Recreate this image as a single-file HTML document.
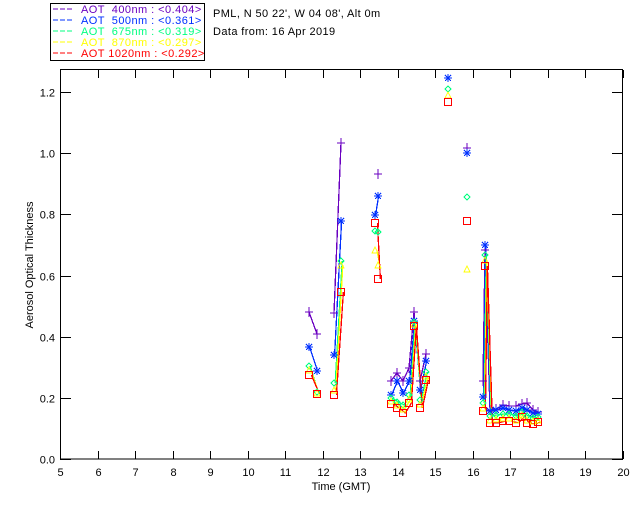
<!DOCTYPE html>
<html><head><meta charset="utf-8"><style>
body{margin:0;background:#fff;width:640px;height:512px;overflow:hidden}
svg{display:block}
text{font-family:"Liberation Sans",sans-serif;font-size:11px}
.lg text{letter-spacing:0.45px}
.tt{letter-spacing:0.4px}
</style></head><body>
<svg id="s" width="640" height="512" xmlns="http://www.w3.org/2000/svg" shape-rendering="crispEdges">
<rect x="50.5" y="3.5" width="154" height="57" fill="none" stroke="#000"/>
<g class="lg">
<line x1="53" y1="9" x2="74" y2="9" stroke="#6a00c0" stroke-dasharray="5,2"/><text x="81" y="13" fill="#6a00c0" xml:space="preserve">AOT  400nm : &lt;0.404&gt;</text>
<line x1="53" y1="20" x2="74" y2="20" stroke="#0030ff" stroke-dasharray="5,2"/><text x="81" y="24" fill="#0030ff" xml:space="preserve">AOT  500nm : &lt;0.361&gt;</text>
<line x1="53" y1="31" x2="74" y2="31" stroke="#00ff80" stroke-dasharray="5,2"/><text x="81" y="35" fill="#00ff80" xml:space="preserve">AOT  675nm : &lt;0.319&gt;</text>
<line x1="53" y1="42" x2="74" y2="42" stroke="#ffff00" stroke-dasharray="5,2"/><text x="81" y="46" fill="#ffff00" xml:space="preserve">AOT  870nm : &lt;0.297&gt;</text>
<line x1="53" y1="53" x2="74" y2="53" stroke="#ff0000" stroke-dasharray="5,2"/><text x="81" y="57" fill="#ff0000" xml:space="preserve">AOT 1020nm : &lt;0.292&gt;</text>
</g>
<text class="tt" x="213" y="17">PML, N 50 22', W 04 08', Alt 0m</text>
<text class="tt" x="213" y="35">Data from: 16 Apr 2019</text>
<rect x="60.5" y="69.5" width="562" height="389.5" fill="none" stroke="#000"/>
<g id="ax" stroke="#000"></g>
<g id="lab"></g>
<text x="341" y="490" text-anchor="middle">Time (GMT)</text>
<text transform="translate(33,265) rotate(-90)" text-anchor="middle" font-size="10">Aerosol Optical Thickness</text>
<g id="d" fill="none"></g>
</svg>
<script>
var ax=document.getElementById('ax'),lab=document.getElementById('lab'),d=document.getElementById('d');
var h='',l='';
for(var i=5;i<=20;i++){var x=Math.round(60+(i-5)*37.53)+0.5;h+='<line x1="'+x+'" y1="459" x2="'+x+'" y2="451"/><line x1="'+x+'" y1="70" x2="'+x+'" y2="78"/>';l+='<text x="'+x+'" y="476" text-anchor="middle">'+i+'</text>';}
for(var j=0;j<=6;j++){var v=j*0.2,y=Math.round(459-v*305.8)+0.5;h+='<line x1="60" y1="'+y+'" x2="71" y2="'+y+'"/><line x1="612" y1="'+y+'" x2="623" y2="'+y+'"/>';l+='<text x="55" y="'+(y+4)+'" text-anchor="end">'+v.toFixed(1)+'</text>';}
ax.innerHTML=h;lab.innerHTML=l;
var C={p:'#6a00c0',b:'#0030ff',g:'#00ff80',y:'#ffff00',r:'#ff0000'};
var G=[
[[309,312,347,366,370,375],[317,334,371,392,393,394]],
[[334,313,355,383,390,395],[341,143,221,261,265,292]],
[[375,null,215,231,250,223],[378,174,196,232,265,279]],
[[391,381,395,398,401,404],[397,373,381,402,405,408],[403,381,393,405,409,413],[409,368,381,395,399,403],[414,312,321,322,324,326],[420,381,390,400,404,408],[426,354,361,372,376,380]],
[[448,null,78,89,95,102]],
[[467,148,153,197,269,221]],
[[483,381,397,403,408,411],[485,250,245,255,260,266],[490,410,411,416,420,423],[496,409,410,415,419,423],[503,405,408,414,418,421],[509,406,410,414,418,421],[516,406,411,416,420,423],[522,404,408,412,415,417],[527,403,410,416,420,423],[533,410,413,418,421,424],[538,412,414,417,420,422]]
];
var keys=['p','b','g','y','r'],o='';
G.forEach(function(g){
keys.forEach(function(k,ki){
var pts=g.filter(function(p){return p[ki+1]!=null}).map(function(p){return (p[0]+ki*0.6)+','+p[ki+1]});
if(pts.length>1)o+='<polyline points="'+pts.join(' ')+'" stroke="'+C[k]+'" stroke-width="1.3"/>';
});
g.forEach(function(p){
var x=p[0];
keys.forEach(function(k,ki){var y=p[ki+1];if(y==null)return;var c=C[k];
if(k=='p')o+='<path d="M'+(x-4)+' '+y+'H'+(x+4)+'M'+x+' '+(y-5)+'V'+(y+5)+'" stroke="'+c+'"/>';
if(k=='b')o+='<path d="M'+(x-4)+' '+y+'H'+(x+4)+'M'+x+' '+(y-4)+'V'+(y+4)+'M'+(x-3)+' '+(y-3)+'L'+(x+3)+' '+(y+3)+'M'+(x-3)+' '+(y+3)+'L'+(x+3)+' '+(y-3)+'" stroke="'+c+'" stroke-width="1.3"/>';
if(k=='g')o+='<path d="M'+x+' '+(y-3)+'L'+(x+3)+' '+y+'L'+x+' '+(y+3)+'L'+(x-3)+' '+y+'Z" stroke="'+c+'"/>';
if(k=='y')o+='<path d="M'+x+' '+(y-3)+'L'+(x+3)+' '+(y+3)+'L'+(x-3)+' '+(y+3)+'Z" stroke="'+c+'"/>';
if(k=='r')o+='<rect x="'+(x-3.5)+'" y="'+(y-3.5)+'" width="7" height="7" stroke="'+c+'" stroke-width="1.2"/>';
});});
});
d.innerHTML=o;
</script>
</body></html>
